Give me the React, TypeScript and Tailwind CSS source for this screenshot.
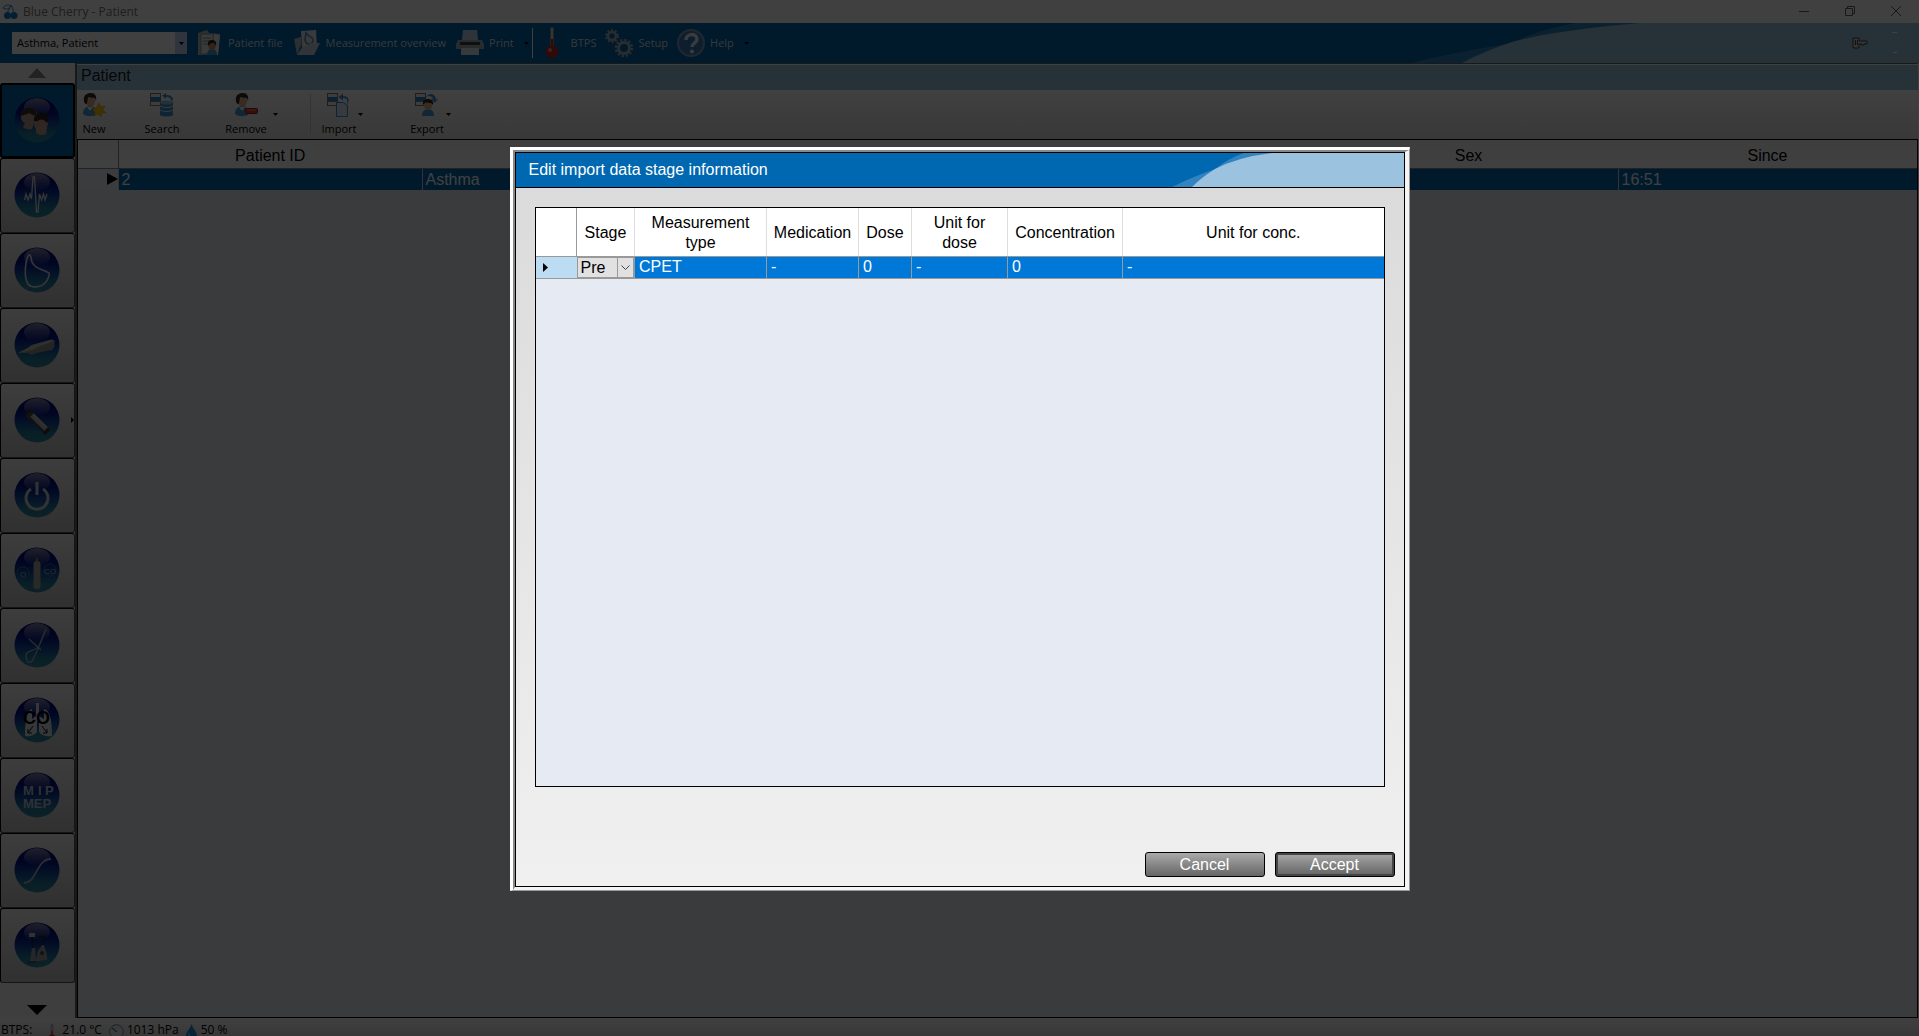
import type { ReactNode } from 'react';

const patientColumns = ['Patient ID', '', '', '', 'Sex', 'Since'];
const patientRow = ['2', 'Asthma', '', '', '', '16:51'];

const stageColumns = [
  { name: 'Measurement type', width: 'w-[132px]', value: 'CPET' },
  { name: 'Medication', width: 'w-[92px]', value: '-' },
  { name: 'Dose', width: 'w-[53px]', value: '0' },
  { name: 'Unit for dose', width: 'w-[96px]', value: '-' },
  { name: 'Concentration', width: 'w-[115px]', value: '0' },
  { name: 'Unit for conc.', width: '', value: '-' },
];

function Caret({ className = '' }: { className?: string }) {
  return (
    <svg width="5" height="3" viewBox="0 0 5 3" className={className}>
      <path d="M0 0h5L2.5 3z" fill="#000" />
    </svg>
  );
}

/* Head and shoulders used by several toolbar icons */
function Person() {
  return (
    <g>
      <path d="M1 21c0-5 3-8 7-8s7 3 7 8c-3 3-11 3-14 0z" fill="#4a9ad8" />
      <path d="M5 14l3 4 3-4z" fill="#e8f2fa" />
      <ellipse cx="8.500" cy="8" rx="4.500" ry="5.500" fill="#e0ab80" />
      <path d="M2 8C1 2 5 0 9 0c4 0 6 3 5 8l-1-3c-3 0-6-1-7-1 0 2-1 4-1 7-2 0-3-1-3-3z" fill="#2c2826" />
    </g>
  );
}

function Records() {
  return (
    <g>
      <rect x="0.500" y="0.500" width="10" height="12" fill="#f4f4f4" stroke="#777" />
      <rect x="1" y="4" width="9" height="4" fill="#2b82c4" />
      <path d="M1 8.500h9" stroke="#888" />
    </g>
  );
}

function NewIcon() {
  return (
    <svg width="24" height="24" viewBox="0 0 24 24">
      <Person />
      <path d="M17 10l2 4 4-1-2 4 3 3-4 0-1 4-3-3-4 2 1-4-3-3 4-1z" fill="#f5c211" stroke="#c89400" strokeWidth=".5" />
    </svg>
  );
}

function SearchIcon() {
  return (
    <svg width="24" height="24" viewBox="0 0 24 24">
      <Records />
      <path d="M10 9h13v13c-2 2-11 2-13 0z" fill="#3f8fca" />
      <ellipse cx="16.500" cy="9.500" rx="6.500" ry="2" fill="#8fc4ea" />
      <path d="M10 13c3 2 10 2 13 0M10 17c3 2 10 2 13 0" stroke="#d7ebf8" fill="none" />
      <path d="M21 8c0-3-2-4-5-4V6l-4-3.500L16 0v2c5 0 7 2 7 5z" fill="#3c8fcf" />
    </svg>
  );
}

function RemoveIcon() {
  return (
    <svg width="24" height="24" viewBox="0 0 24 24">
      <Person />
      <rect x="11.500" y="15.500" width="12" height="5" rx="1" fill="#d8341c" stroke="#a01c0c" />
      <path d="M13 17h9" stroke="#f08a78" />
    </svg>
  );
}

function ImportIcon() {
  return (
    <svg width="24" height="24" viewBox="0 0 24 24">
      <Records />
      <path d="M9.500 9.500h7l4 3v11h-11z" fill="#d9ecfa" stroke="#3a86c2" />
      <path d="M20 12c1-5 0-7-4-7v2.500L11.500 4 16 .5V3c6 0 7 4 4 9z" fill="#3c8fcf" />
    </svg>
  );
}

function ExportIcon() {
  return (
    <svg width="24" height="24" viewBox="0 0 24 24">
      <Records />
      <path d="M11 4c4-5 9-3 10 2h2l-3.500 4L16 6h2c-1-3-4-4-7-2z" fill="#3c8fcf" />
      <path d="M7 23c0-5 3-7 6-7s6 2 6 7z" fill="#4a9ad8" />
      <ellipse cx="13" cy="12.500" rx="4" ry="4.500" fill="#e0ab80" />
      <path d="M8 12c-1-4 2-6 5-6s6 2 5 6l-2-2c-3 0-4-1-6 0z" fill="#2c2826" />
    </svg>
  );
}

function CherryIcon() {
  return (
    <svg width="16" height="16" viewBox="0 0 16 16">
      <path d="M5 10C6 6 8 4 9 1c2 3 2 5 3 9M1 4c3-4 6-3 8-2-2 3-5 4-8 2z" fill="none" stroke="#2a8ac8" />
      <circle cx="5.500" cy="11.500" r="3.500" fill="#0f7cc4" />
      <circle cx="12" cy="11.500" r="3.500" fill="#0f7cc4" />
    </svg>
  );
}

function PatientFileIcon() {
  return (
    <svg width="26" height="28" viewBox="0 0 26 28">
      <path d="M2 4l9-3 2 3 11 1-2 21H2z" fill="#b4b9be" />
      <path d="M5 5h12v20H5z" fill="#e2e5e8" stroke="#8a9096" />
      <path d="M7 9h8M7 12h8M7 15h4" stroke="#7f868c" />
      <path d="M18 5l6 1-2 20h-5z" fill="#e6e9ec" />
      <path d="M11 26c0-4 2-6 5-6s5 2 5 6z" fill="#4a9ad8" />
      <ellipse cx="16" cy="17" rx="3.500" ry="4" fill="#c98d62" />
      <path d="M12 17c-1-4 1-6 4-6s5 2 4 6l-2-3c-2 0-3 0-4 1z" fill="#2c2826" />
    </svg>
  );
}

function OverviewIcon() {
  return (
    <svg width="28" height="28" viewBox="0 0 28 28">
      <path d="M1 10l7-2v8l-4 10z" fill="#aeb6bd" />
      <path d="M8 2l15-1 1 18H9z" fill="#e2e7ea" />
      <path d="M13 4c-1 5-2 10 2 11 4 0 6-2 5-5-1-2-5-3-7-6z" fill="none" stroke="#5a8ab0" strokeWidth="1.500" />
      <path d="M4 26l6-9h4l3-3 10 0-6 12z" fill="#c6d4df" />
    </svg>
  );
}

function PrinterIcon() {
  return (
    <svg width="30" height="28" viewBox="0 0 30 28">
      <path d="M8 1h14l1 10H7z" fill="#b7cfe2" />
      <path d="M3 11h24l2 4v5H1v-5z" fill="#a3a8ad" />
      <path d="M5 14.500h20" stroke="#3a3d40" strokeWidth="3" />
      <path d="M6 19h18v7H6z" fill="#dbe5ee" />
    </svg>
  );
}

function ThermometerIcon({ width = 16, height = 32 }: { width?: number; height?: number }) {
  return (
    <svg width={width} height={height} viewBox="0 0 16 32">
      <rect x="6.500" y="0.500" width="3" height="24" rx="1" fill="#d8d8d8" stroke="#888" />
      <rect x="7" y="12" width="2" height="14" fill="#c81e1e" />
      <circle cx="8" cy="25" r="6.500" fill="#b82828" />
      <circle cx="6" cy="23" r="2" fill="#eb8a8a" />
    </svg>
  );
}

function GearsIcon() {
  return (
    <svg width="30" height="30" viewBox="0 0 30 30" fill="none" stroke="#a8aeb4">
      <circle cx="8" cy="8" r="4" strokeWidth="2.500" />
      <circle cx="8" cy="8" r="6" strokeWidth="2" strokeDasharray="2 1.800" />
      <circle cx="20" cy="20" r="5.500" strokeWidth="3" />
      <circle cx="20" cy="20" r="8" strokeWidth="2.500" strokeDasharray="2.200 2" />
    </svg>
  );
}

function HelpIcon() {
  return (
    <svg width="30" height="30" viewBox="0 0 30 30">
      <circle cx="15" cy="15" r="13" fill="#3a78b6" stroke="#7f9fba" strokeWidth="2" />
      <path d="M10 12c0-7 11-7 11-1 0 4-5 4-5 8" fill="none" stroke="#e8ecf0" strokeWidth="3.500" />
      <circle cx="16" cy="23.500" r="2" fill="#e8ecf0" />
    </svg>
  );
}

function Orb({ children }: { children: ReactNode }) {
  return (
    <svg width="46" height="46" viewBox="0 0 46 46">
      <defs>
        <linearGradient id="orb" x1="0" y1="0" x2="0" y2="1">
          <stop offset="0" stopColor="#00005c" />
          <stop offset=".35" stopColor="#06188a" />
          <stop offset=".6" stopColor="#14509c" />
          <stop offset=".8" stopColor="#257c9c" />
          <stop offset="1" stopColor="#2f8496" />
        </linearGradient>
        <linearGradient id="gloss" x1="0" y1="0" x2="0" y2="1">
          <stop offset="0" stopColor="#fff" stopOpacity=".5" />
          <stop offset="1" stopColor="#fff" stopOpacity="0" />
        </linearGradient>
      </defs>
      <circle cx="23" cy="23" r="22.500" fill="url(#orb)" />
      <ellipse cx="23" cy="10" rx="13" ry="9" fill="url(#gloss)" />
      {children}
    </svg>
  );
}

const orbText = { fontFamily: '"Liberation Sans", Arial, sans-serif' };

const modules = [
  {
    name: 'Patient',
    art: (
      <>
        <path d="M7 20c0-8 6-11 11-9 5 1 6 6 3 12l-3 9c-3 1-7 0-9-2l2-4c-3-1-4-3-4-6z" fill="#b8968a" />
        <path d="M7 19c0-7 6-10 12-8 4 2 4 5 2 8l-6-3c-2 2-4 1-8 3z" fill="#37302e" />
        <path d="M20 25c0-8 5-10 10-8 5 2 5 8 3 13l-1 7c-4 2-7 1-10-1v-4c-2-2-2-5-2-7z" fill="#c09888" />
        <path d="M20 24c-1-7 6-10 11-8 4 2 5 6 2 10-3-4-6-4-8-3-1 2-3 1-5 1z" fill="#2b2523" />
      </>
    ),
  },
  {
    name: 'Ergo spirometry',
    art: (
      <path
        d="M10.500 28L12 22l2 6 2-6 1.500 5L19 5l1.500 0L22.500 40l1.500 0 1.500-18 2 6 2-6 1.500 6 2-6"
        fill="none" stroke="#d6dbe2" strokeWidth="1.300"
      />
    ),
  },
  {
    name: 'Flow volume',
    art: <path d="M15 8c-3 2-6 22-1 29 3 4 12 4 17-1 3-3 5-9 4-10-7-4-14-4-17-11-1-3-1-8-3-7z" fill="none" stroke="#d6dbe2" strokeWidth="1.600" />,
  },
  {
    name: 'Sensor',
    art: (
      <>
        <path d="M4 31l8-4 6-4 18-5c2-1 4 0 5 1l-1 3 1 2-3 4-16 3c-3 2-5 2-8 0z" fill="#8f8f8a" />
        <path d="M4 31l8-4 6-4 18-5 4 1-16 6-6 3z" fill="#bcbcb6" />
      </>
    ),
  },
  {
    name: 'Calibration',
    art: (
      <>
        <path d="M14 16l20 19" stroke="#444" strokeWidth="8" />
        <path d="M18 18l14 14" stroke="#b4b4b4" strokeWidth="5" />
        <path d="M20 18l13 12" stroke="#dadada" strokeWidth="1" />
        <path d="M11 17l6-4M30 37l5-5" stroke="#333" strokeWidth="3" />
      </>
    ),
  },
  {
    name: 'Power',
    art: (
      <>
        <path d="M17 17a11 11 0 1 0 12 0" fill="none" stroke="#c6ccd2" strokeWidth="3" />
        <path d="M23 10v13" stroke="#c6ccd2" strokeWidth="3" />
      </>
    ),
  },
  {
    name: 'Gas',
    art: (
      <>
        <rect x="19.500" y="14" width="7" height="28" rx="3" fill="#a2a39e" />
        <path d="M23 11v4" stroke="#a08c38" strokeWidth="2" />
        <circle cx="9" cy="26" r="6" fill="none" stroke="#2f6ea4" />
        <circle cx="36" cy="23" r="6" fill="none" stroke="#2f6ea4" />
        <text x="6" y="30" fontSize="8" fill="#9fb4c6" style={orbText}>O</text>
        <text x="30" y="27" fontSize="8" fill="#9fb4c6" style={orbText}>CO</text>
      </>
    ),
  },
  {
    name: 'Resistance',
    art: <path d="M32 7c-4 8-9 25-14 32-3 3-6 1-6-6 0-5 9-3 13-9 3-6 4-10 7-17M15 17l12 11" fill="none" stroke="#a3afba" strokeWidth="1.300" />,
  },
  {
    name: 'Diffusion',
    art: (
      <>
        <path d="M22 6h3v13l5 3V12c5 1 8 8 8 27-6 1-11-1-13-4V24h-2v11c-2 3-7 5-12 4 0-19 3-26 7-27v10l4-3z" fill="#d8dce0" />
        <path d="M19 29l-5 7M28 29l5 7M14 32v4h4M33 32v4h-4" stroke="#111" fill="none" />
        <text x="9" y="27" fontSize="18" fontWeight="bold" fill="#000" style={orbText}>CO</text>
      </>
    ),
  },
  {
    name: 'MIP MEP',
    art: (
      <>
        <text x="9" y="23" fontSize="13" fontWeight="bold" fill="#b7c4d2" style={orbText}>M</text>
        <text x="24" y="23" fontSize="13" fontWeight="bold" fill="#b7c4d2" style={orbText}>I</text>
        <text x="31" y="23" fontSize="13" fontWeight="bold" fill="#b7c4d2" style={orbText}>P</text>
        <text x="9" y="36" fontSize="13" fontWeight="bold" fill="#b7c4d2" style={orbText}>MEP</text>
      </>
    ),
  },
  {
    name: 'Compliance',
    art: <path d="M10 36c13 0 12-24 27-24" fill="none" stroke="#a9b5c0" strokeWidth="1.800" />,
  },
  {
    name: 'Ergometer',
    art: (
      <>
        <rect x="15" y="11" width="6" height="4" fill="#c6c6c6" />
        <path d="M18 15l1 11M30 15l-2 9M24 15h8" stroke="#222" strokeWidth="1.500" />
        <path d="M18 26h3l1 12 2-9 4-6h2l3 10v5l-8 1-9 1z" fill="#96999d" />
        <circle cx="28" cy="31" r="2" fill="#444" />
        <path d="M14 40h8" stroke="#333" />
      </>
    ),
  },
];

function BannerButton({ icon, label, caret }: { icon: ReactNode; label: string; caret?: boolean }) {
  return (
    <button type="button" className="flex items-center gap-1">
      <span className="flex w-[30px] justify-center">{icon}</span>
      {label}
      {caret && <Caret className="ml-1.5" />}
    </button>
  );
}

function ToolButton({ icon, label, width, caret }: { icon: ReactNode; label: string; width: string; caret?: boolean }) {
  return (
    <button type="button" className={`flex flex-col items-center gap-1 pt-[3px] text-black ${width}`}>
      <span className="grid w-full grid-cols-[1fr_24px_1fr] items-end">
        <span />
        {icon}
        {caret && <Caret className="mb-px justify-self-end" />}
      </span>
      {label}
    </button>
  );
}

function MainWindow() {
  return (
    <div className="flex h-full flex-col bg-white font-['Open_Sans',sans-serif] text-[11px] leading-4">
      <header className="flex h-[23px] shrink-0 items-center justify-between text-[12px] text-[#777]">
        <div className="flex items-center gap-[5px] pl-0.5">
          <CherryIcon />
          <span>Blue Cherry - Patient</span>
        </div>
        <div className="flex pb-0.5">
          <button type="button" aria-label="Minimize" className="flex w-[46px] justify-center">
            <svg width="10" height="10" viewBox="0 0 10 10" stroke="#666"><path d="M0 5.500h10" /></svg>
          </button>
          <button type="button" aria-label="Restore" className="flex w-[46px] justify-center">
            <svg width="10" height="10" viewBox="0 0 10 10" fill="none" stroke="#666"><path d="M.5 2.500h7v7h-7zM2.500 2V.5h7v7H8" /></svg>
          </button>
          <button type="button" aria-label="Close" className="flex w-[46px] justify-center">
            <svg width="10" height="10" viewBox="0 0 10 10" stroke="#666"><path d="M0 0l10 10M10 0L0 10" /></svg>
          </button>
        </div>
      </header>

      {/* Blue banner with the main menu */}
      <div className="relative flex h-10 shrink-0 items-center bg-[#0067b1] pl-3 text-white">
        <svg width="519" height="40" viewBox="0 0 519 40" className="absolute top-0 right-0">
          <path d="M12 40C60 28 90 24 112 20L125 14Q145 6 175 0H519V40z" fill="#3084c0" />
          <path d="M62 40Q82 29 112 19Q150 8 240 0H519V40z" fill="#9bc3df" />
        </svg>
        <div className="flex h-[22px] w-[175px] items-center bg-white text-black">
          <select aria-label="Patient" className="h-full min-w-0 flex-1 appearance-none pl-[5px] outline-none">
            <option>Asthma, Patient</option>
          </select>
          <span className="flex h-full w-3 items-center justify-center bg-[#c0cfee]"><Caret /></span>
        </div>
        <nav className="flex items-center text-[#ddd]">
          <div className="flex items-center gap-[9px] pr-[3px] pl-[7px]">
            <BannerButton icon={<PatientFileIcon />} label="Patient file" />
            <BannerButton icon={<OverviewIcon />} label="Measurement overview" />
            <BannerButton icon={<PrinterIcon />} label="Print" caret />
          </div>
          <div className="flex h-[30px] items-center gap-2 border-l border-white pl-1">
            <BannerButton icon={<ThermometerIcon />} label="BTPS" />
            <BannerButton icon={<GearsIcon />} label="Setup" />
            <BannerButton icon={<HelpIcon />} label="Help" caret />
          </div>
        </nav>
        <div className="relative ml-auto flex items-center gap-6 pr-[22px]">
          <svg width="16" height="12" viewBox="0 0 16 12">
            <path d="M1 1h6v3h8v3h-3v1h-2V7H7v4H1z" fill="#ccc" stroke="#444" />
            <path d="M3.500 3v5M5.500 3v5" fill="none" stroke="#444" />
          </svg>
          <svg width="5" height="22" viewBox="0 0 5 22" stroke="#fff"><path d="M0 .5h5M1 20.500h4" /></svg>
        </div>
      </div>

      <div className="flex min-h-0 flex-1">
        {/* Module sidebar */}
        <aside className="flex w-[75px] shrink-0 flex-col bg-[#f6f6f6]">
          <button type="button" aria-label="Scroll up" className="flex h-5 shrink-0 items-end justify-center pr-0.5 pb-[5px]">
            <svg width="18" height="10" viewBox="0 0 18 10"><path d="M9 0l9 10H0z" fill="#888" /></svg>
          </button>
          {modules.map((m, i) => (
            <button
              key={m.name}
              type="button"
              aria-label={m.name}
              className={`grid h-[75px] shrink-0 grid-cols-[11px_1fr_13px] items-center rounded-[3px] pb-0.5 ${
                i === 0
                  ? 'border-2 border-black bg-[#0067b1]'
                  : 'border border-t-black border-l-black border-r-[#555] border-b-[#555] bg-linear-to-b from-[#f2f2f2] to-[#c0c0c0]'
              }`}
            >
              <span />
              <span className="flex justify-center"><Orb>{m.art}</Orb></span>
              {i === 4 && (
                <svg width="3" height="6" viewBox="0 0 3 6" className="justify-self-end"><path d="M0 0l3 3-3 3z" /></svg>
              )}
            </button>
          ))}
          <button type="button" aria-label="Scroll down" className="flex flex-1 items-end justify-center pr-0.5 pb-[3px]">
            <svg width="20" height="10" viewBox="0 0 20 10"><path d="M0 0h20L10 10z" /></svg>
          </button>
        </aside>

        <main className="mr-px flex min-w-0 flex-1 flex-col border-t border-l-2 border-[#666] pt-px">
          <h1 className="h-[25px] shrink-0 bg-[#9bc3df] pl-1 font-['Liberation_Sans',Arial,sans-serif] text-[16px] leading-[21px] text-[#222]">
            Patient
          </h1>
          <div className="flex h-[49px] shrink-0 gap-6 bg-linear-to-b from-white to-[#e0e0e0] pl-px">
            <ToolButton icon={<NewIcon />} label="New" width="w-8" />
            <ToolButton icon={<SearchIcon />} label="Search" width="w-14" />
            <ToolButton icon={<RemoveIcon />} label="Remove" width="w-16" caret />
            <div className="ml-2 flex gap-10">
              <span className="mt-1 -mr-9 h-10 w-px bg-[#ccc]" />
              <ToolButton icon={<ImportIcon />} label="Import" width="w-12" caret />
              <ToolButton icon={<ExportIcon />} label="Export" width="w-12" caret />
            </div>
          </div>
          <div className="flex-1 border border-black bg-[#e6ebf3]">
            <table className="w-full table-fixed border-collapse font-['Liberation_Sans',Arial,sans-serif] text-[16px] leading-[21px]">
              <thead>
                <tr className="h-7 bg-linear-to-b from-[#f4f5f7] to-white text-black">
                  <th className="w-10 border-r border-b border-[#888]" />
                  {patientColumns.map((name, i) => (
                    <th key={i} className={`border-b border-[#888] pt-1 pb-0 font-normal ${i === 0 ? 'w-[304px]' : ''}`}>{name}</th>
                  ))}
                </tr>
              </thead>
              <tbody>
                <tr className="h-[22px] bg-[#0067b1] text-white">
                  <td className="bg-[#ecf0f6]">
                    <svg width="11" height="12" viewBox="0 0 11 12" className="ml-auto"><path d="M0 0l11 6-11 6z" /></svg>
                  </td>
                  {patientRow.map((value, i) => (
                    <td key={i} className="border-l border-[#ccd] pl-[3px]">{value}</td>
                  ))}
                </tr>
              </tbody>
            </table>
          </div>
        </main>
      </div>

      <footer className="flex h-[18px] shrink-0 items-start overflow-hidden bg-linear-to-b from-white to-[#ddd] pt-1.5 pl-px text-[12px] leading-3 text-black">
        <span>BTPS:</span>
        <span className="ml-3.5 flex gap-1"><ThermometerIcon width={12} height={18} />21.0 °C</span>
        <span className="ml-[7px] flex gap-[3px]">
          <svg width="15" height="15" viewBox="0 0 15 15" fill="none">
            <circle cx="7.500" cy="7.500" r="6.800" fill="#e2f0f0" stroke="#888" />
            <path d="M3 4l5 4" stroke="#333" />
          </svg>
          1013 hPa
        </span>
        <span className="ml-[7px] flex gap-1">
          <svg width="11" height="16" viewBox="0 0 11 16">
            <path d="M5.500 0C7 5 11 8 11 11.500a5.500 5 0 0 1-11 0C0 8 4 5 5.500 0z" fill="#1e8fd8" />
            <path d="M3 9c-1 3 1 4 2 4" stroke="#b5e0f8" fill="none" />
          </svg>
          50 %
        </span>
      </footer>
    </div>
  );
}

function StageDialog() {
  return (
    <section
      role="dialog"
      aria-labelledby="dialog-title"
      className="w-[900px] border-t-3 border-r border-b border-l-3 border-t-white border-r-[#999] border-b-[#999] border-l-white font-['Liberation_Sans',Arial,sans-serif] text-[16px] text-black"
    >
      <div className="border-t-2 border-r-4 border-b-3 border-l-2 border-t-[#888] border-r-[#f4f4f4] border-b-[#f4f4f4] border-l-[#888]">
        <div className="flex flex-col border border-black bg-linear-to-b from-[#dadada] to-[#f0f0f0]">
          <div className="relative flex h-[35px] items-center border-b border-black bg-[#0067b1] pl-[13px] text-white">
            <svg width="240" height="34" viewBox="0 0 240 34" className="absolute top-0 right-0">
              <path d="M8 34Q28 24 51 16Q65 5 80 0H240V34z" fill="#3284c0" />
              <path d="M28 34Q38 24 51 16Q74 4 108 0H240V34z" fill="#9bc3df" />
            </svg>
            <h2 id="dialog-title" className="relative">Edit import data stage information</h2>
          </div>

          <div className="mx-[19px] mt-[19px] h-[580px] border border-black bg-[#e5eaf3]">
            <table className="w-full table-fixed border-collapse">
              <thead>
                <tr className="h-12 bg-white leading-5">
                  <th className="w-[41px] border-r border-b border-[#999]" />
                  <th id="stage-header" className="w-[58px] border-b border-b-[#999] pt-0.5 font-normal">Stage</th>
                  {stageColumns.map(col => (
                    <th key={col.name} className={`border-b border-l border-b-[#999] border-l-[#ddd] px-1 pt-0.5 font-normal ${col.width}`}>
                      {col.name}
                    </th>
                  ))}
                </tr>
              </thead>
              <tbody>
                <tr className="h-[22px] border-b border-[#999] bg-[#0078d7] leading-5 text-white">
                  <td className="bg-[#bbdcf3] pl-[7px]">
                    <svg width="5" height="9" viewBox="0 0 5 9"><path d="M0 0l5 4.500L0 9z" /></svg>
                  </td>
                  <td className="p-0">
                    <div className="flex h-[21px] items-stretch border border-[#999] bg-[#e1e1e1] text-black">
                      <select aria-labelledby="stage-header" className="min-w-0 flex-1 appearance-none pl-[3px] leading-[19px] outline-none">
                        <option>Pre</option>
                      </select>
                      <span className="flex w-4 items-center justify-center border-l border-[#999]">
                        <svg width="9" height="5" viewBox="0 0 9 5" fill="none" stroke="#444"><path d="M.5.5l4 4 4-4" /></svg>
                      </span>
                    </div>
                  </td>
                  {stageColumns.map(col => (
                    <td key={col.name} className="border-l border-[#999] py-0 pl-1">{col.value}</td>
                  ))}
                </tr>
              </tbody>
            </table>
          </div>

          <div className="mt-[65px] flex justify-end gap-2.5 pr-[9px] pb-[9px] text-white">
            <button type="button" className="h-[25px] w-[120px] rounded-[3px] border border-black bg-linear-to-b from-[#aaa] to-[#666]">
              Cancel
            </button>
            <button type="button" className="flex h-[25px] w-[120px] rounded-[3px] border border-black bg-[#444] p-0.5">
              <span className="flex size-full items-center justify-center bg-linear-to-b from-[#a4a4a4] to-[#686868]">Accept</span>
            </button>
          </div>
        </div>
      </div>
    </section>
  );
}

export default function App() {
  return (
    <div className="relative h-screen overflow-hidden">
      <MainWindow />
      {/* Dimmed backdrop under the dialog */}
      <div className="absolute inset-0 flex items-center justify-center bg-black/75 pt-0.5">
        <StageDialog />
      </div>
    </div>
  );
}
